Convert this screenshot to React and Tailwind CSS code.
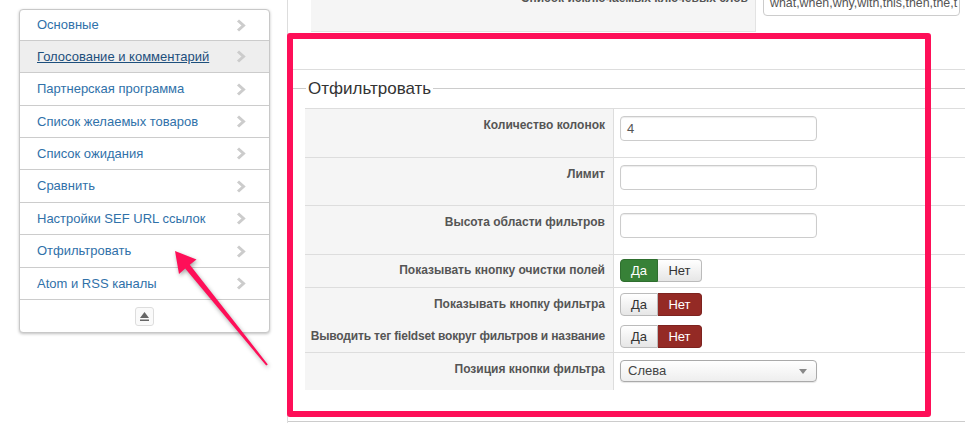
import React from "react";

const menu = [
  { label: "Основные", h: "h-[31px]" },
  { label: "Голосование и комментарий", h: "h-[32px]", active: true },
  { label: "Партнерская программа", h: "h-[33px]" },
  { label: "Список желаемых товаров", h: "h-[32px]" },
  { label: "Список ожидания", h: "h-[32px]" },
  { label: "Сравнить", h: "h-[33px]" },
  { label: "Настройки SEF URL ссылок", h: "h-[32px]" },
  { label: "Отфильтровать", h: "h-[33px]" },
  { label: "Atom и RSS каналы", h: "h-[32px]" },
];

const Chevron = () => (
  <svg width="10" height="13" viewBox="0 0 10 13" className="shrink-0">
    <polyline points="2,1.5 7.5,6.5 2,11.5" fill="none" stroke="#cccccc" strokeWidth="3" />
  </svg>
);

const Toggle = ({ yes }) => (
  <div className="flex h-[23px] text-[13px] leading-none">
    <div
      className={
        yes
          ? "w-[38px] flex items-center justify-center rounded-l-[4px] bg-[#378137] text-white border border-[#2f6e2f]"
          : "w-[38px] flex items-center justify-center rounded-l-[4px] bg-gradient-to-b from-white to-[#e6e6e6] text-[#333] border border-[#bbb]"
      }
    >
      Да
    </div>
    <div
      className={
        yes
          ? "w-[44px] flex items-center justify-center rounded-r-[4px] bg-gradient-to-b from-white to-[#e6e6e6] text-[#333] border border-l-0 border-[#bbb]"
          : "w-[44px] flex items-center justify-center rounded-r-[4px] bg-[#942a25] text-white border border-l-0 border-[#7d231f]"
      }
    >
      Нет
    </div>
  </div>
);

const Row = ({ label, h, labelPt, ctrlPt, border = true, tight = false, children }) => (
  <div className={`flex ${h} ${border ? "border-b border-[#ddd]" : ""}`}>
    <div className={`w-[309px] shrink-0 bg-[#f5f5f5] border-r border-[#ddd] flex justify-end items-start pr-2 ${labelPt} text-[12px] font-bold text-[#555] leading-[14px] whitespace-nowrap ${tight ? "tracking-[-0.18px]" : ""}`}>
      <span>{label}</span>
    </div>
    <div className={`pl-[6px] ${ctrlPt}`}>{children}</div>
  </div>
);

const TextInput = ({ value }) => (
  <div className="w-[197px] h-[25px] border border-[#ccc] rounded-[4px] px-[6px] flex items-center text-[13px] text-[#555] shadow-[inset_0_1px_1px_rgba(0,0,0,0.08)]">
    {value}
  </div>
);

export default function App() {
  return (
    <div className="relative w-[965px] h-[423px] bg-white overflow-hidden font-['Liberation_Sans',Arial,sans-serif]">
      <div className="flex h-full">
        {/* Sidebar */}
        <div className="w-[287px] shrink-0 pt-[9px] pl-[19px]">
          <div className="w-[251px] border border-[#c8c8c8] rounded-[4px] bg-white shadow-[0_1px_3px_rgba(0,0,0,0.25)] overflow-hidden">
            {menu.map((m) => (
              <div
                key={m.label}
                className={`${m.h} flex items-center justify-between pl-[17px] pr-[23px] border-b border-[#ccc] text-[13px] ${
                  m.active ? "bg-[#eeeeee] text-[#1d4f7c] underline" : "text-[#3071a9]"
                }`}
              >
                <span>{m.label}</span>
                <Chevron />
              </div>
            ))}
            <div className="h-[32px] flex items-center justify-center">
              <div className="w-[19px] h-[19px] border border-[#ddd] rounded-[3px] bg-[#fafafa] flex items-center justify-center">
                <svg width="11" height="11" viewBox="0 0 11 11">
                  <polygon points="5.5,1 10,7 1,7" fill="#666" />
                  <rect x="1" y="8.5" width="9" height="1.5" fill="#666" />
                </svg>
              </div>
            </div>
          </div>
        </div>

        {/* Main */}
        <div className="flex-1 border-l border-[#ddd]">
          {/* previous row, cut at top */}
          <div className="flex -mt-[20px] h-[52px]">
            <div className="ml-[23px] w-[445px] bg-[#f5f5f5] border-b border-r border-[#e3e3e3] text-right pr-[7px] pt-[11px] text-[12px] font-bold text-[#555] leading-[14px]">
              Список исключаемых ключевых слов
            </div>
            <div className="pl-[7px] pt-[10px]">
              <div className="w-[197px] h-[26px] border border-[#ccc] rounded-[4px] pl-[6px] flex items-center text-[12.4px] text-[#555] whitespace-nowrap overflow-hidden">
                what,when,why,with,this,then,the,t
              </div>
            </div>
          </div>

          <div className="h-[38px] border-b border-[#ddd]" />

          {/* fieldset legend */}
          <div className="flex items-center h-[38px] pb-[2px]">
            <div className="w-[18px] border-t border-[#ccc]" />
            <div className="px-[2px] text-[17px] text-[#333] leading-none">Отфильтровать</div>
            <div className="flex-1 border-t border-[#ccc]" />
          </div>

          <div className="ml-[17px] border-t border-[#ddd]">
            <Row label="Количество колонок" h="h-[49px]" labelPt="pt-[9px]" ctrlPt="pt-[7px]">
              <TextInput value="4" />
            </Row>
            <Row label="Лимит" h="h-[48px]" labelPt="pt-[9px]" ctrlPt="pt-[7px]">
              <TextInput value="" />
            </Row>
            <Row label="Высота области фильтров" h="h-[49px]" labelPt="pt-[9px]" ctrlPt="pt-[7px]">
              <TextInput value="" />
            </Row>
            <Row label="Показывать кнопку очистки полей" h="h-[33px]" labelPt="pt-[8px]" ctrlPt="pt-[4px]">
              <Toggle yes />
            </Row>
            <Row label="Показывать кнопку фильтра" h="h-[32px]" labelPt="pt-[9px]" ctrlPt="pt-[5px]" border={false}>
              <Toggle />
            </Row>
            <Row label="Выводить тег fieldset вокруг фильтров и название" h="h-[33px]" labelPt="pt-[9px]" ctrlPt="pt-[5px]" tight>
              <Toggle />
            </Row>
            <Row label="Позиция кнопки фильтра" h="h-[37px]" labelPt="pt-[9px]" ctrlPt="pt-[7px]" border={false}>
              <div className="w-[197px] h-[22px] border border-[#aaa] rounded-[4px] bg-gradient-to-b from-white to-[#eee] flex items-center justify-between pl-[7px] pr-[9px] text-[13px] text-[#444] shadow-[0_1px_1px_rgba(0,0,0,0.1)]">
                <span>Слева</span>
                <svg width="8" height="5" viewBox="0 0 8 5">
                  <polygon points="0,0 8,0 4,5" fill="#888" />
                </svg>
              </div>
            </Row>
          </div>

          <div className="mt-[31px] border-t border-[#ccc]" />
        </div>
      </div>

      {/* annotation: highlight box */}
      <div className="absolute left-[287px] top-[33px] w-[644px] h-[384px] border-[6px] border-[#fe0f58] rounded-[3px] pointer-events-none" />

      {/* annotation: arrow */}
      <svg
        className="absolute left-0 top-0 pointer-events-none drop-shadow-[1px_2px_2px_rgba(0,0,0,0.35)]"
        width="965"
        height="423"
        viewBox="0 0 965 423"
      >
        <polygon
          points="175,251 196.5,259.5 189.8,264.7 267.8,364.4 266.2,365.6 185.2,268.5 179,274"
          fill="#fe0f58"
        />
      </svg>
    </div>
  );
}
